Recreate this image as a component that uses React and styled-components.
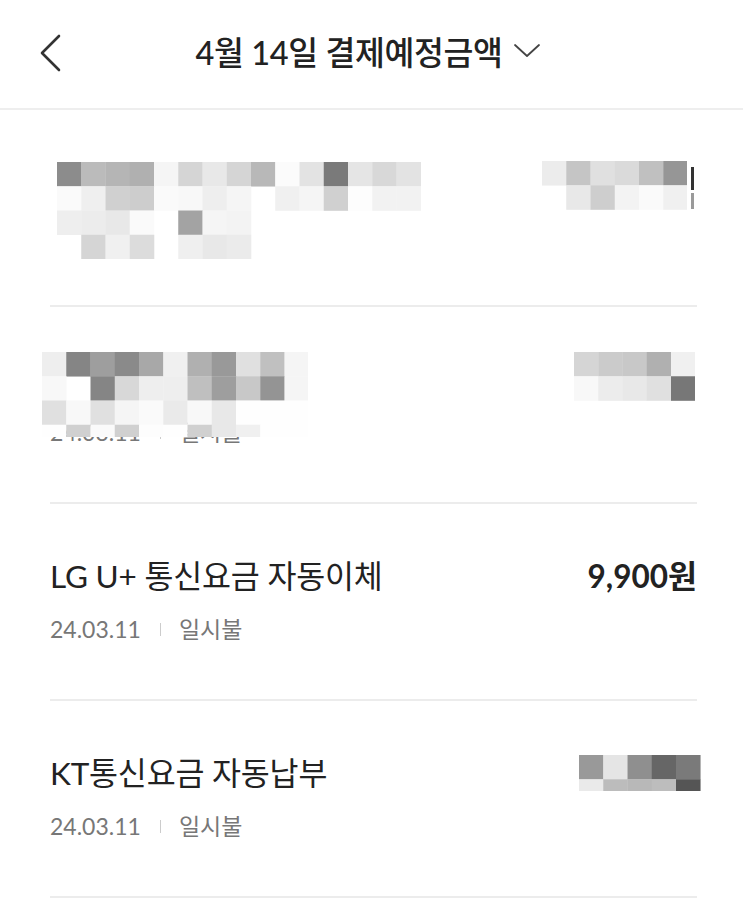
import React from "react";
import styled, { createGlobalStyle } from "styled-components";

const GlobalStyle = createGlobalStyle`
  html, body { margin: 0; padding: 0; background: #ffffff; }
  body {
    font-family: "Lato", "Noto Sans CJK KR", sans-serif;
    color: #222222;
    -webkit-font-smoothing: antialiased;
  }
  * { box-sizing: border-box; }
`;

const Page = styled.div`
  width: 743px;
  min-height: 916px;
  background: #ffffff;
  overflow: hidden;
`;

const Header = styled.header`
  position: relative;
  height: 110px;
  border-bottom: 2px solid #eeeeee;
  display: flex;
  align-items: center;
  justify-content: center;
  padding-bottom: 8px;
`;

const BackButton = styled.button`
  position: absolute;
  left: 36px;
  top: 32px;
  width: 28px;
  height: 42px;
  padding: 0;
  border: 0;
  background: transparent;
  display: flex;
  align-items: center;
  justify-content: center;
`;

const TitleButton = styled.button`
  border: 0;
  background: transparent;
  padding: 0;
  margin-right: 6px;
  display: flex;
  align-items: center;
  gap: 11px;
  font-family: "Lato", "Noto Sans CJK KR", sans-serif;
  font-size: 32.5px;
  font-weight: 500;
  color: #222222;
  letter-spacing: -0.4px;
`;

const List = styled.ul`
  list-style: none;
  margin: 0 46px 0 50px;
  padding: 0;
`;

const Row = styled.li`
  position: relative;
  height: 197px;
  border-bottom: 2px solid #ececec;
  display: flex;
  align-items: flex-start;
  justify-content: space-between;
  padding-top: 52px;
`;

const Info = styled.div`
  display: flex;
  flex-direction: column;
  gap: 18px;
`;

const Name = styled.div`
  font-size: 31.5px;
  line-height: 40px;
  color: #222222;
  letter-spacing: -0.2px;
`;

const Meta = styled.div`
  display: flex;
  align-items: center;
  font-size: 23px;
  line-height: 30px;
  color: #777777;
`;

const Divider = styled.span`
  width: 1px;
  height: 13px;
  background: #cccccc;
  margin: 0 18px 0 19px;
`;

const Amount = styled.div`
  font-size: 31.5px;
  line-height: 40px;
  font-weight: 700;
  color: #222222;
`;

const MosaicLayer = styled.svg`
  position: absolute;
  left: ${(p) => p.$left}px;
  top: ${(p) => p.$top}px;
  display: block;
`;

const CutEdge = styled.span`
  position: absolute;
  left: ${(p) => p.$left}px;
  top: ${(p) => p.$top}px;
  width: 3px;
  height: ${(p) => p.$h}px;
  background: ${(p) => p.$color};
`;

const CELL = 24.25;

function Mosaic({ left, top, rows, heights }) {
  const cols = rows[0].length;
  const hs = heights || rows.map(() => CELL);
  const total = hs.reduce((a, b) => a + b, 0);
  let y = 0;
  const rects = [];
  rows.forEach((r, ri) => {
    r.forEach((g, ci) => {
      if (g < 0xff) {
        rects.push(
          <rect
            key={ri + "-" + ci}
            x={ci * CELL}
            y={y}
            width={CELL + 0.3}
            height={hs[ri] + 0.3}
            fill={`rgb(${g},${g},${g})`}
          />
        );
      }
    });
    y += hs[ri];
  });
  return (
    <MosaicLayer
      $left={left}
      $top={top}
      width={cols * CELL}
      height={total}
      viewBox={`0 0 ${cols * CELL} ${total}`}
      aria-hidden="true"
    >
      {rects}
    </MosaicLayer>
  );
}

const BackIcon = () => (
  <svg width="24" height="38" viewBox="0 0 24 38" fill="none">
    <polyline
      points="21,2 4,19 21,36"
      stroke="#333333"
      strokeWidth="2.6"
      strokeLinecap="round"
      strokeLinejoin="round"
    />
  </svg>
);

const DownIcon = () => (
  <svg width="28" height="16" viewBox="0 0 28 16" fill="none">
    <polyline
      points="2,3 14,14 26,3"
      stroke="#444444"
      strokeWidth="1.8"
      strokeLinecap="round"
      strokeLinejoin="round"
    />
  </svg>
);

const row1Left = [
  [0x8c, 0xbb, 0xb5, 0xb0, 0xf5, 0xd5, 0xe8, 0xd5, 0xb8, 0xfb, 0xe3, 0x7a, 0xe5, 0xd8, 0xe3],
  [0xfa, 0xef, 0xd0, 0xcd, 0xfa, 0xf8, 0xee, 0xf5, 0xff, 0xf0, 0xf5, 0xd0, 0xfd, 0xf2, 0xf2],
  [0xee, 0xec, 0xe8, 0xfa, 0xff, 0xa3, 0xf5, 0xf3, 0xff, 0xff, 0xff, 0xff, 0xff, 0xff, 0xff],
  [0xff, 0xd5, 0xf0, 0xdc, 0xff, 0xef, 0xe8, 0xeb, 0xff, 0xff, 0xff, 0xff, 0xff, 0xff, 0xff],
];
const row1Right = [
  [0xec, 0xc5, 0xe0, 0xda, 0xc0, 0x96],
  [0xff, 0xe8, 0xce, 0xf3, 0xfa, 0xf0],
];
const row2Left = [
  [0xee, 0x85, 0x9e, 0x8a, 0xa8, 0xf0, 0xb0, 0x99, 0xe0, 0xc0, 0xf5],
  [0xf8, 0xff, 0x85, 0xd8, 0xee, 0xee, 0xbf, 0x9e, 0xc8, 0x94, 0xf5],
  [0xe0, 0xf8, 0xe0, 0xf5, 0xfa, 0xea, 0xf8, 0xe8, 0xfe, 0xfe, 0xfe],
  [0xfe, 0xd0, 0xfa, 0xd0, 0xfd, 0xfe, 0xd0, 0xe8, 0xf0, 0xfe, 0xfe],
];
const row2Right = [
  [0xd5, 0xcb, 0xc8, 0xb0, 0xf0],
  [0xf8, 0xec, 0xe8, 0xe0, 0x77],
];
const row4Right = [
  [0x99, 0xe5, 0x8f, 0x66, 0x7a],
  [0xea, 0xbc, 0xb8, 0xbd, 0x55],
];

export default function App() {
  return (
    <Page>
      <GlobalStyle />
      <Header>
        <BackButton aria-label="뒤로">
          <BackIcon />
        </BackButton>
        <TitleButton>
          <span>4월 14일 결제예정금액</span>
          <DownIcon />
        </TitleButton>
      </Header>
      <List>
        <Row>
          <Mosaic left={7.3} top={52} rows={row1Left} />
          <Mosaic left={491.7} top={51} rows={row1Right} />
          <CutEdge $left={640.5} $top={57} $h={23} $color="#333333" />
          <CutEdge $left={640.5} $top={83} $h={16} $color="#9a9a9a" />
        </Row>
        <Row>
          <Info>
            <Name>&nbsp;</Name>
            <Meta>
              <span>24.03.11</span>
              <Divider />
              <span>일시불</span>
            </Meta>
          </Info>
          <Mosaic left={-8.3} top={45} rows={row2Left} heights={[CELL, CELL, CELL, 12]} />
          <Mosaic left={524} top={45} rows={row2Right} />
        </Row>
        <Row>
          <Info>
            <Name>LG U+ 통신요금 자동이체</Name>
            <Meta>
              <span>24.03.11</span>
              <Divider />
              <span>일시불</span>
            </Meta>
          </Info>
          <Amount>9,900원</Amount>
        </Row>
        <Row>
          <Info>
            <Name>KT통신요금 자동납부</Name>
            <Meta>
              <span>24.03.11</span>
              <Divider />
              <span>일시불</span>
            </Meta>
          </Info>
          <Mosaic left={529.3} top={54} rows={row4Right} heights={[CELL, 12]} />
        </Row>
      </List>
    </Page>
  );
}
